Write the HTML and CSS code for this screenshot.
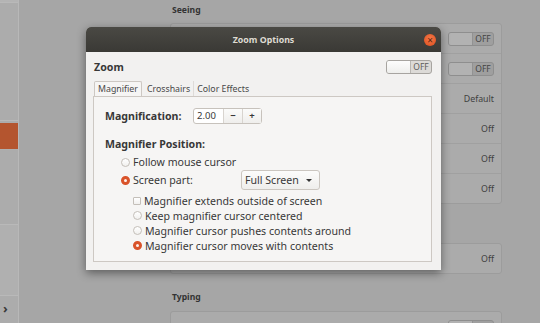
FILE: index.html
```html
<!DOCTYPE html>
<html lang="en">
<head>
<meta charset="UTF-8">
<meta name="viewport" content="width=device-width, initial-scale=1.0">
<title>Universal Access - Zoom Options</title>
<link rel="stylesheet" href="styles.css">
</head>
<body>
    <div class="app">
        <aside class="sidebar">
            <div class="side-item side-top"></div>
            <div class="side-item side-tall"></div>
            <div class="side-item side-active"></div>
            <div class="side-item side-mid"></div>
            <div class="side-item side-low"></div>
            <div class="side-more">&rsaquo;</div>
        </aside>

        <main class="panel">
            <div class="content">
                <h2 class="group-title">Seeing</h2>
                <div class="list">
                    <div class="row"><span class="switch dim"><span class="knob"></span><span class="state">OFF</span></span></div>
                    <div class="row"><span class="switch dim"><span class="knob"></span><span class="state">OFF</span></span></div>
                    <div class="row"><span class="row-value">Default</span></div>
                    <div class="row"><span class="row-value">Off</span></div>
                    <div class="row"><span class="row-value">Off</span></div>
                    <div class="row"><span class="row-value">Off</span></div>
                </div>

                <div class="list list-gap">
                    <div class="row"><span class="row-value">Off</span></div>
                </div>

                <h2 class="group-title group-typing">Typing</h2>
                <div class="list">
                    <div class="row"><span class="switch dim"><span class="knob"></span><span class="state"></span></span></div>
                </div>
            </div>
        </main>
    </div>

    <!-- the dialog floats over the settings window -->
    <div class="dialog">
        <div class="titlebar">
            <span class="title">Zoom Options</span>
            <span class="close">&times;</span>
        </div>
        <div class="dialog-body">
            <div class="dialog-head">
                <span class="dialog-heading">Zoom</span>
                <span class="switch"><span class="knob"></span><span class="state">OFF</span></span>
            </div>

            <div class="tabs">
                <span class="tab active">Magnifier</span>
                <span class="tab">Crosshairs</span>
                <span class="tab">Color Effects</span>
            </div>

            <div class="notebook">
                <div class="field">
                    <span class="field-label">Magnification:</span>
                    <span class="spin">
                        <span class="spin-value">2.00</span>
                        <span class="spin-btn">&minus;</span>
                        <span class="spin-btn">+</span>
                    </span>
                </div>

                <div class="section-label">Magnifier Position:</div>

                <div class="option">
                    <span class="radio"></span>
                    <span>Follow mouse cursor</span>
                </div>
                <div class="option option-combo">
                    <span class="radio checked"></span>
                    <span class="combo-label">Screen part:</span>
                    <span class="combo">Full Screen<span class="arrow"></span></span>
                </div>

                <div class="sub-options">
                    <div class="option sub">
                        <span class="check"></span>
                        <span>Magnifier extends outside of screen</span>
                    </div>
                    <div class="option sub">
                        <span class="radio"></span>
                        <span>Keep magnifier cursor centered</span>
                    </div>
                    <div class="option sub">
                        <span class="radio"></span>
                        <span>Magnifier cursor pushes contents around</span>
                    </div>
                    <div class="option sub">
                        <span class="radio checked"></span>
                        <span>Magnifier cursor moves with contents</span>
                    </div>
                </div>
            </div>
        </div>
    </div>
</body>
</html>
```

FILE: styles.css
```css
body {
    margin: 0;
    width: 540px;
    height: 323px;
    overflow: hidden;
    font-family: "Noto Sans", "Open Sans", sans-serif;
    font-size: 10.6px;
    color: #383838;
    background-color: #a6a6a6;
}

.app {
    display: flex;
    height: 323px;
    overflow: hidden;
}

/* left sidebar, dimmed behind the dialog */
.sidebar {
    width: 18px;
    flex-shrink: 0;
    display: flex;
    flex-direction: column;
    background-color: #acacac;
    border-right: 1px solid #b8b8b8;
}

.side-item {
    border-bottom: 1px solid #b9b9b9;
}

.side-top {
    height: 2px;
    background-color: #b4b4b4;
}

.side-tall {
    height: 117px;
}

.side-active {
    height: 26px;
    margin-top: 2px;
    background-color: #b4552f;
    border-bottom: none;
}

.side-mid {
    height: 74px;
    border-top: 1px solid #b0b0b0;
}

.side-low {
    height: 70px;
    background-color: #b0b0b0;
}

.side-more {
    padding-left: 3px;
    margin-top: 7px;
    font-size: 13px;
    line-height: 10px;
    font-weight: bold;
    color: #3a3a3a;
}

.panel {
    flex: 1;
    padding-left: 151px;
}

.content {
    width: 332px;
}

.group-title {
    margin: 4px 0 6px 2px;
    font-size: 8.6px;
    line-height: 13px;
    font-weight: bold;
    color: #333;
}

.group-typing {
    margin-top: 17px;
    margin-bottom: 7px;
}

.list {
    border: 1px solid #9c9c9c;
    border-radius: 3px;
    background-color: #ababab;
}

.list-gap {
    margin-top: 39px;
}

.row {
    height: 29px;
    display: flex;
    align-items: center;
    justify-content: flex-end;
    padding: 0 7px 0 12px;
    border-top: 1px solid #a0a0a0;
}

.row:first-child {
    border-top: none;
}

.row-value {
    font-size: 8.8px;
    color: #404040;
}

/* on/off switches */
.switch {
    display: flex;
    width: 46px;
    height: 14px;
    border: 1px solid #a7a4a0;
    border-radius: 3px;
    overflow: hidden;
    box-sizing: border-box;
    background-color: #dcdad7;
}

.switch .knob {
    width: 23px;
    background: linear-gradient(#fdfdfd, #eeeeec);
    border-right: 1px solid #b9b6b2;
}

.switch .state {
    flex: 1;
    text-align: center;
    font-size: 8.5px;
    line-height: 12px;
    color: #5c5c5c;
}

.switch.dim {
    border-color: #8e8e8e;
    background-color: #9f9f9f;
}

.switch.dim .knob {
    background: #b2b2b2;
    border-right-color: #929292;
}

.switch.dim .state {
    color: #444;
}

/* dialog window */
.dialog {
    position: absolute;
    left: 86px;
    top: 27px;
    width: 355px;
    height: 243px;
    display: flex;
    flex-direction: column;
    border-radius: 5px 5px 0 0;
    background-color: #f2f1f0;
    box-shadow: 0 3px 10px rgba(0, 0, 0, 0.45);
    overflow: hidden;
}

.titlebar {
    height: 25px;
    flex-shrink: 0;
    display: flex;
    align-items: center;
    justify-content: center;
    position: relative;
    background: linear-gradient(#4a4944, #3a3935);
}

.title {
    font-size: 8.8px;
    font-weight: bold;
    color: #dfdbd2;
    padding-top: 1px;
}

.close {
    position: absolute;
    right: 5px;
    top: 7px;
    width: 12px;
    height: 12px;
    border-radius: 50%;
    background: radial-gradient(circle at 50% 40%, #f47a4a, #dd4c1c);
    color: #5a2410;
    font-size: 10px;
    line-height: 12px;
    text-align: center;
}

.dialog-body {
    flex: 1;
    padding: 8px 9px 0 7px;
    display: flex;
    flex-direction: column;
}

.dialog-head {
    display: flex;
    justify-content: space-between;
    align-items: center;
    height: 14px;
}

.dialog-heading {
    margin-left: 1px;
    font-size: 10.6px;
    font-weight: bold;
}

.tabs {
    display: flex;
    margin-top: 7px;
    height: 15px;
    padding-left: 1px;
}

.tab {
    padding: 1px 3px 0;
    line-height: 14px;
    font-size: 8.8px;
    color: #484848;
    border-right: 1px solid #dedbd8;
}

.tab.active {
    border: 1px solid #cdc8c3;
    border-bottom: none;
    border-radius: 2px 2px 0 0;
    background-color: #f6f5f4;
    margin-right: 2px;
    padding-top: 0;
}

.tab:last-child {
    border-right: none;
}

.notebook {
    height: 166px;
    box-sizing: border-box;
    border: 1px solid #cdc8c3;
    background-color: #f6f5f4;
    padding: 11px 11px 0 11px;
}

.field {
    display: flex;
    align-items: center;
    height: 16px;
}

.field-label,
.section-label {
    font-size: 10.6px;
    font-weight: bold;
}

.field-label {
    width: 88px;
    flex-shrink: 0;
}

.spin {
    display: flex;
    height: 16px;
    border: 1px solid #c7c2bc;
    border-radius: 3px;
    box-sizing: border-box;
    background-color: #fff;
    font-size: 9.5px;
    line-height: 14px;
}

.spin-value {
    width: 29px;
    padding-left: 3px;
    box-sizing: border-box;
}

.spin-btn {
    width: 18px;
    text-align: center;
    font-weight: bold;
    border-left: 1px solid #d8d4cf;
    background: linear-gradient(#fbfbfa, #efeeec);
}

.section-label {
    margin-top: 13px;
    line-height: 14px;
}

.option {
    display: flex;
    align-items: center;
    height: 14px;
    margin-top: 4px;
    padding-left: 16px;
}

.option-combo {
    height: 20px;
    margin-top: 1px;
}

.radio,
.check {
    width: 9px;
    height: 9px;
    flex-shrink: 0;
    margin-right: 3px;
    box-sizing: border-box;
    border: 1px solid #c4bfb9;
    background: linear-gradient(#ffffff, #f1f0ee);
}

.radio {
    border-radius: 50%;
}

.check {
    width: 8px;
    height: 8px;
    border-radius: 1px;
}

.radio.checked {
    border: 3px solid #d9532a;
    background: #fdf1ec;
}

.combo-label {
    width: 108px;
    flex-shrink: 0;
}

.combo {
    width: 79px;
    height: 20px;
    box-sizing: border-box;
    display: flex;
    align-items: center;
    justify-content: space-between;
    padding: 0 7px 0 3px;
    border: 1px solid #cbc6c0;
    border-radius: 3px;
    background: linear-gradient(#fcfcfb, #efeeec);
}

.arrow {
    width: 0;
    height: 0;
    border-left: 3px solid transparent;
    border-right: 3px solid transparent;
    border-top: 3px solid #333;
}

.sub-options {
    margin-top: 3px;
}

.option.sub {
    height: 15px;
    margin-top: 0;
    padding-left: 28px;
}
```
